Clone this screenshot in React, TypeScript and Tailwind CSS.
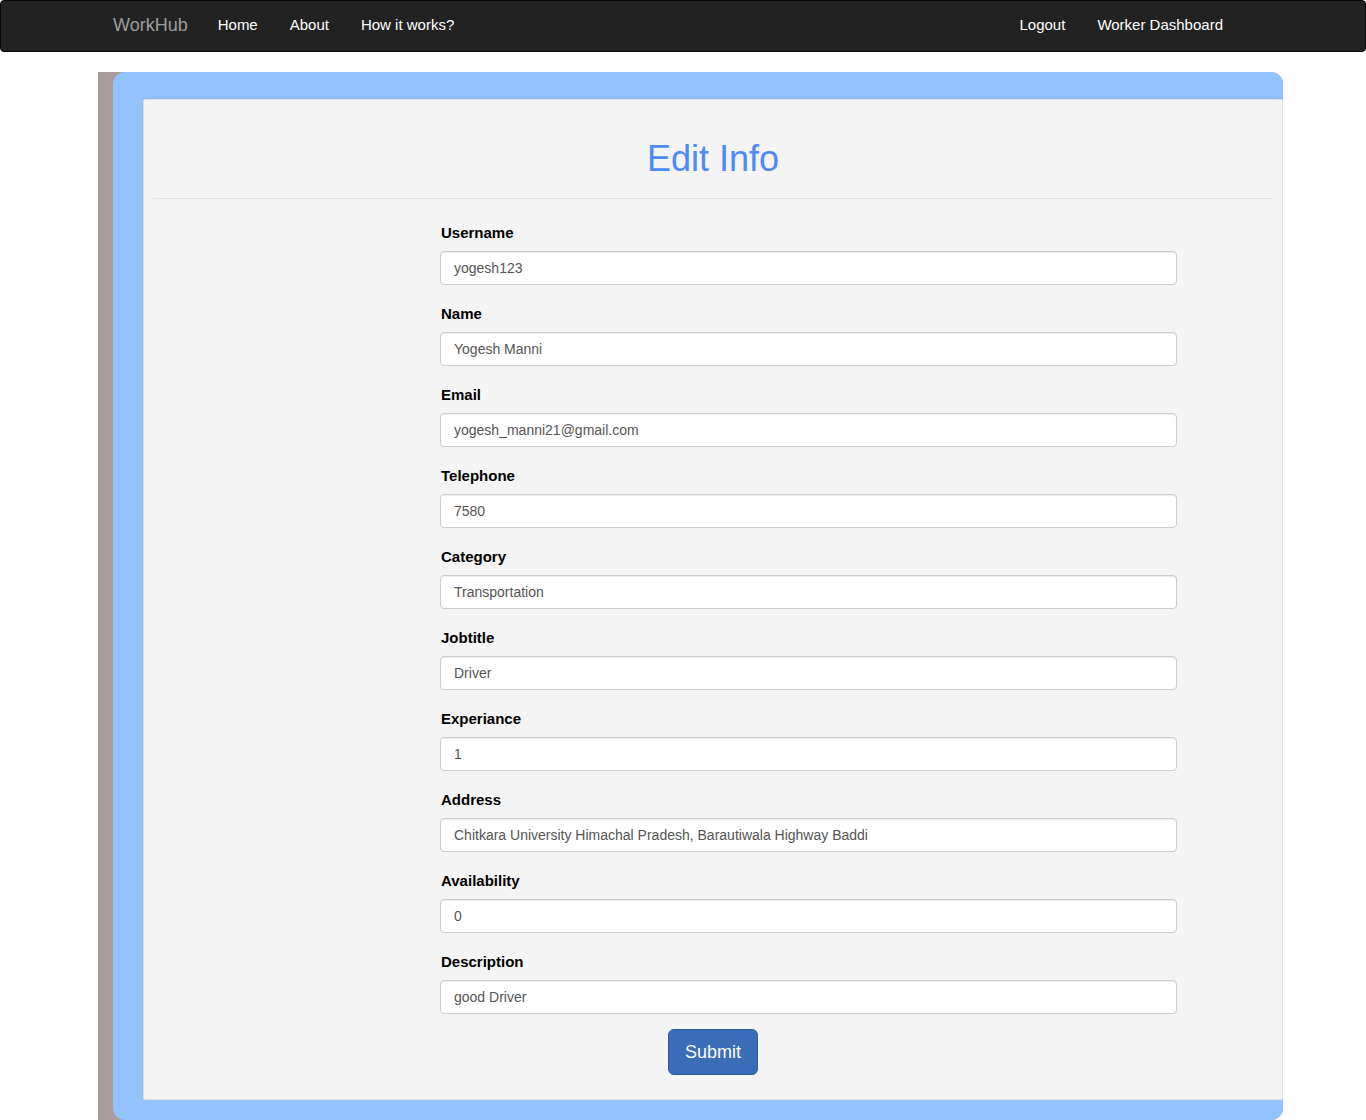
import React from "react";

const fields = [
  { label: "Username", value: "yogesh123" },
  { label: "Name", value: "Yogesh Manni" },
  { label: "Email", value: "yogesh_manni21@gmail.com" },
  { label: "Telephone", value: "7580" },
  { label: "Category", value: "Transportation" },
  { label: "Jobtitle", value: "Driver" },
  { label: "Experiance", value: "1" },
  { label: "Address", value: "Chitkara University Himachal Pradesh, Barautiwala Highway Baddi" },
  { label: "Availability", value: "0" },
  { label: "Description", value: "good Driver" },
];

export default function App() {
  return (
    <div className="min-h-[1120px] bg-white font-['Liberation_Sans',Arial,sans-serif]">
      <nav className="h-[52px] bg-[#222] border border-[#080808] rounded-[4px] flex items-center pb-[2px]">
        <div className="w-[1170px] mx-auto px-[15px] flex items-center">
          <a className="text-[18px] text-[#9d9d9d] pr-[14px] leading-[20px]">WorkHub</a>
          <a className="text-[15px] text-white px-[16px]">Home</a>
          <a className="text-[15px] text-white px-[16px]">About</a>
          <a className="text-[15px] text-white px-[16px]">How it works?</a>
          <div className="ml-auto mr-[14px] flex items-center">
            <a className="text-[15px] text-white px-[16px]">Logout</a>
            <a className="text-[15px] text-white px-[16px]">Worker Dashboard</a>
          </div>
        </div>
      </nav>

      <div className="mt-[20px] ml-[98px] w-[1185px] bg-[#a89c9a] pl-[15px] rounded-r-[12px]">
        <div className="bg-[#94c2fe] rounded-[12px] pl-[30px] pt-[27px] pb-[20px]">
          <div className="bg-[#f4f4f4] border border-[#dedede] rounded-[2px] shadow-[0_-1px_2px_rgba(0,0,0,0.05)] pb-[24px]">
            <h1 className="pt-[39px] pb-[-1px] text-center text-[36px] leading-[39px] text-[#4d8bf8]">Edit Info</h1>
            <hr className="mx-[9px] mt-[20px] border-0 border-t border-[#e2e2e2]" />
            <form className="pl-[296px] mt-[23px]" onSubmit={(e) => e.preventDefault()}>
              <div className="w-[737px]">
                {fields.map((f, i) => (
                  <div key={f.label} className={i === fields.length - 1 ? "mb-[15px]" : "mb-[18px]"}>
                    <label className="block pl-[1px] text-[15px] leading-[21px] font-bold text-black mb-[8px]">{f.label}</label>
                    <input
                      defaultValue={f.value}
                      className="block w-full h-[34px] bg-white border border-[#ccc] rounded-[4px] pl-[13px] pr-[12px] text-[14px] text-[#555] shadow-[inset_0_1px_1px_rgba(0,0,0,0.075)] outline-none"
                    />
                  </div>
                ))}
              </div>
            </form>
            <div className="flex justify-center">
              <button className="w-[90px] h-[46px] bg-[#3a6cb8] border border-[#2f5a9e] rounded-[6px] text-white text-[18px]">
                Submit
              </button>
            </div>
          </div>
        </div>
      </div>
    </div>
  );
}
